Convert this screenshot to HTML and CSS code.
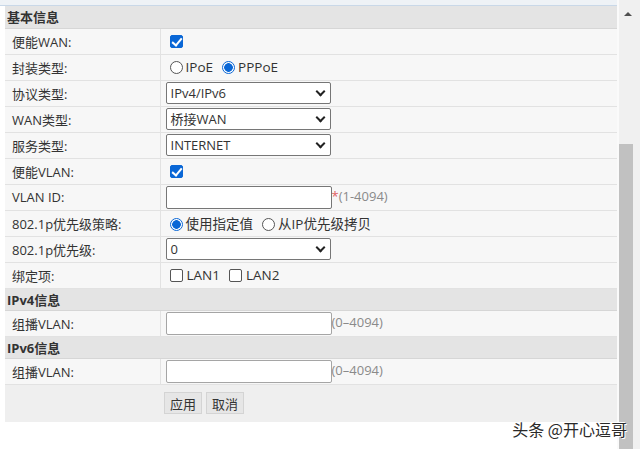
FILE: index.html
```html
<!DOCTYPE html>
<html lang="zh-CN">
<head>
    <meta charset="UTF-8">
    <title>WAN配置</title>
    <link rel="stylesheet" href="styles.css">
</head>
<body>
    <div class="page">
        <div class="content">
            <div class="topbar"></div>
            <table class="cfg">
                <tr class="sec"><td colspan="2">基本信息</td></tr>
                <tr>
                    <td class="lbl">便能WAN:</td>
                    <td><span class="chk on"></span></td>
                </tr>
                <tr>
                    <td class="lbl">封装类型:</td>
                    <td><span class="radio"></span><span class="opt">IPoE</span><span class="radio on"></span><span class="opt">PPPoE</span></td>
                </tr>
                <tr>
                    <td class="lbl">协议类型:</td>
                    <td><span class="sel">IPv4/IPv6</span></td>
                </tr>
                <tr>
                    <td class="lbl">WAN类型:</td>
                    <td><span class="sel">桥接WAN</span></td>
                </tr>
                <tr>
                    <td class="lbl">服务类型:</td>
                    <td><span class="sel">INTERNET</span></td>
                </tr>
                <tr>
                    <td class="lbl">便能VLAN:</td>
                    <td><span class="chk on"></span></td>
                </tr>
                <tr>
                    <td class="lbl">VLAN ID:</td>
                    <td><span class="txt dark"></span><span class="req">*</span><span class="hint">(1-4094)</span></td>
                </tr>
                <tr>
                    <td class="lbl">802.1p优先级策略:</td>
                    <td><span class="radio on"></span><span class="opt">使用指定值</span><span class="radio"></span><span class="opt">从IP优先级拷贝</span></td>
                </tr>
                <tr>
                    <td class="lbl">802.1p优先级:</td>
                    <td><span class="sel">0</span></td>
                </tr>
                <tr>
                    <td class="lbl">绑定项:</td>
                    <td><span class="chk"></span><span class="opt">LAN1</span><span class="chk"></span><span class="opt">LAN2</span></td>
                </tr>
                <tr class="sec"><td colspan="2">IPv4信息</td></tr>
                <tr>
                    <td class="lbl">组播VLAN:</td>
                    <td><span class="txt"></span><span class="hint">(0–4094)</span></td>
                </tr>
                <tr class="sec"><td colspan="2">IPv6信息</td></tr>
                <tr>
                    <td class="lbl">组播VLAN:</td>
                    <td><span class="txt"></span><span class="hint">(0–4094)</span></td>
                </tr>
                <tr class="btns">
                    <td></td>
                    <td><button>应用</button><button>取消</button></td>
                </tr>
            </table>
            <div class="foot"></div>
        </div>
        <div class="scrollbar">
            <div class="arrow"></div>
            <div class="thumb"></div>
        </div>
        <div class="watermark">头条 @开心逗哥</div>
    </div>
</body>
</html>
```

FILE: styles.css
```css
* {
    margin: 0;
    padding: 0;
    box-sizing: border-box;
}

body {
    background: #ffffff;
    font-family: "Open Sans", "Noto Sans CJK SC", sans-serif;
    font-size: 13px;
    color: #333333;
    width: 640px;
    height: 449px;
    overflow: hidden;
}

.page {
    display: flex;
    height: 449px;
    position: relative;
}

.content {
    width: 617px;
    padding-left: 5px;
}

.topbar {
    height: 6px;
    background: #eef2f6;
    border-bottom: 1px solid #c9d8e8;
    margin-left: -5px;
}

.cfg {
    width: 612px;
    border-collapse: collapse;
    background: #f7f7f7;
}

.cfg td {
    height: 26px;
    border-bottom: 1px solid #e2e2e2;
    padding: 0 0 0 5px;
    white-space: nowrap;
}

.cfg td.lbl {
    width: 155px;
    padding-left: 7px;
    border-right: 1px solid #e2e2e2;
    color: #333333;
}

.cfg tr.sec td {
    height: 22px;
    background: #e4e4e4;
    font-weight: bold;
    padding-left: 2px;
    border-bottom: 1px solid #d6d6d6;
}

.chk {
    display: inline-block;
    width: 13px;
    height: 13px;
    border: 1px solid #555555;
    border-radius: 2px;
    background: #ffffff;
    vertical-align: -2px;
    margin: 0 4px 0 4px;
}

.chk.on {
    background: #0a67d6;
    border-color: #0a67d6;
    position: relative;
}

.chk.on::after {
    content: "";
    position: absolute;
    left: 3px;
    top: 0px;
    width: 4px;
    height: 8px;
    border: solid #ffffff;
    border-width: 0 2px 2px 0;
    transform: rotate(40deg);
}

.radio {
    display: inline-block;
    width: 13px;
    height: 13px;
    border: 1px solid #555555;
    border-radius: 50%;
    background: #ffffff;
    vertical-align: -2px;
    margin: 0 3px 0 4px;
}

.radio.on {
    border: 1px solid #0a67d6;
    background: radial-gradient(circle, #0a67d6 0, #0a67d6 4px, #ffffff 4.6px);
}

.opt {
    margin-right: 5px;
    font-size: 13.5px;
}

.sel {
    display: inline-block;
    width: 165px;
    height: 22px;
    line-height: 20px;
    border: 1px solid #767676;
    border-radius: 2px;
    background: #ffffff;
    padding-left: 4px;
    vertical-align: middle;
    position: relative;
}

.sel::after {
    content: "";
    position: absolute;
    right: 6px;
    top: 5px;
    width: 5px;
    height: 5px;
    border: solid #222222;
    border-width: 0 2px 2px 0;
    transform: rotate(45deg);
}

.txt {
    display: inline-block;
    width: 166px;
    height: 23px;
    border: 1px solid #a5a5a5;
    border-radius: 2px;
    background: #ffffff;
    vertical-align: middle;
}

.txt.dark {
    border-color: #767676;
}

.req {
    color: #e06060;
}

.hint {
    color: #8a8a8a;
}

.cfg tr.btns td {
    height: 38px;
    background: #efefef;
    border: none;
    padding-left: 4px;
}

button {
    font-family: "Noto Sans CJK SC", sans-serif;
    font-size: 13px;
    color: #333333;
    height: 22px;
    padding: 0 5px;
    border: 1px solid #d4d4d4;
    background: #e6e6e6;
    margin-right: 4px;
    vertical-align: middle;
}

.foot {
    height: 17px;
    background: #ffffff;
}

.watermark {
    position: absolute;
    right: 13px;
    top: 417px;
    font-family: "Noto Sans CJK SC", sans-serif;
    font-size: 16px;
    color: #2a2a2a;
    text-shadow: 1px 1px 0 #ffffff, -1px -1px 0 #ffffff;
}

.scrollbar {
    width: 23px;
    background: #f0f0f0;
    border-left: 2px solid #fafafa;
    position: relative;
}

.arrow {
    margin: 12px 0 0 5px;
    width: 0;
    height: 0;
    border-left: 4px solid transparent;
    border-right: 4px solid transparent;
    border-bottom: 4px solid #505050;
}

.thumb {
    position: absolute;
    left: 0;
    top: 144px;
    width: 14px;
    bottom: 0;
    background: #c1c1c1;
}
```
